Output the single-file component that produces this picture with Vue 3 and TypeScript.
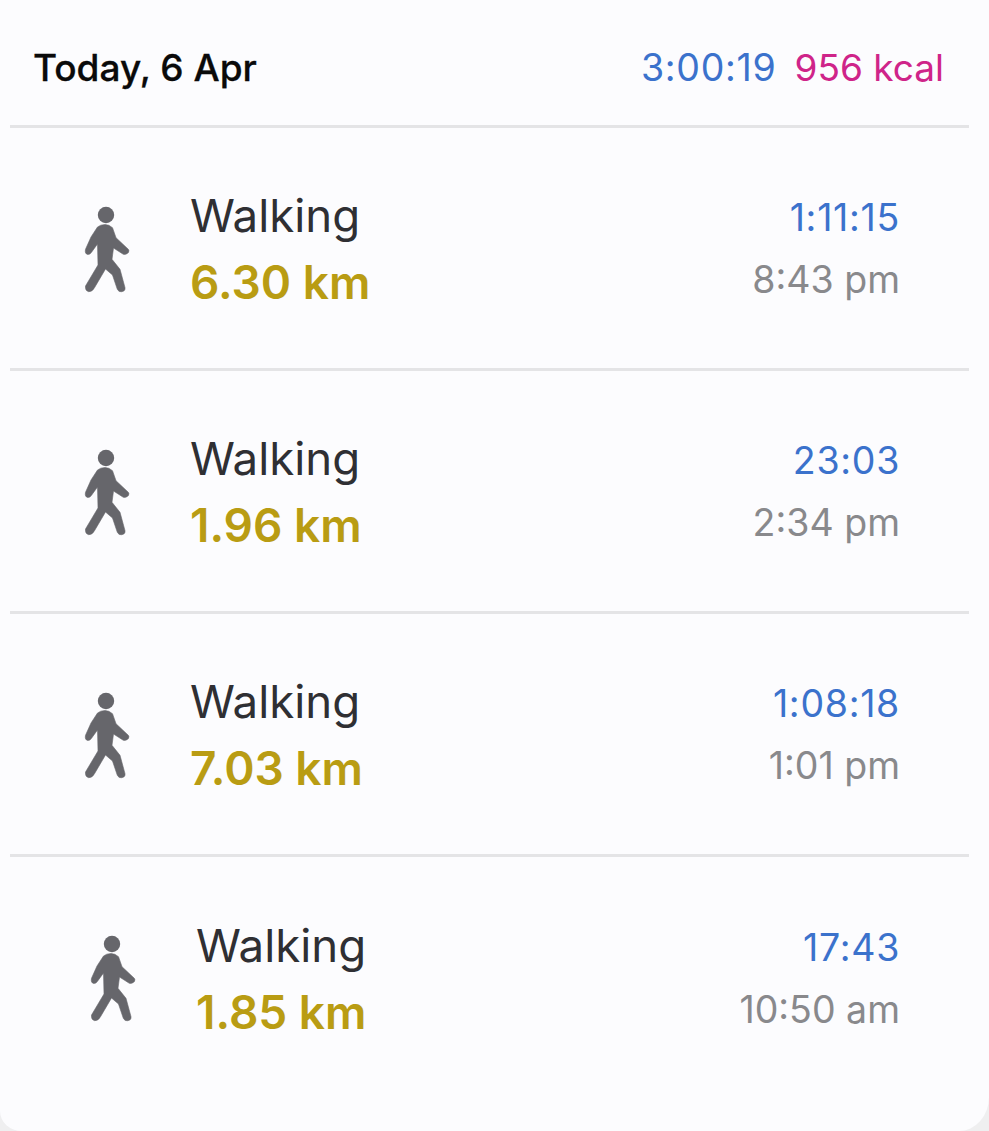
<script setup lang="ts">
interface Activity {
  name: string
  distance: string
  duration: string
  time: string
  shifted?: boolean
}

const activities: Activity[] = [
  { name: 'Walking', distance: '6.30 km', duration: '1:11:15', time: '8:43 pm' },
  { name: 'Walking', distance: '1.96 km', duration: '23:03', time: '2:34 pm' },
  { name: 'Walking', distance: '7.03 km', duration: '1:08:18', time: '1:01 pm' },
  { name: 'Walking', distance: '1.85 km', duration: '17:43', time: '10:50 am', shifted: true },
]
</script>

<template>
  <div class="page">
    <div class="sheet">
      <header class="summary">
        <span class="day">Today, 6 Apr</span>
        <span class="totals">
          <span class="total-time">3:00:19</span>
          <span class="total-kcal">956 kcal</span>
        </span>
      </header>
      <ul class="list">
        <li
          v-for="item in activities"
          :key="item.time"
          :class="['row', { shifted: item.shifted }]"
        >
          <svg class="walker" viewBox="0 0 60 100" aria-hidden="true">
            <circle cx="26" cy="14" r="8.2" fill="#66666b" />
            <path
              d="M17.5 26 L11 36 L5.5 48.3 Q4.5 53 8 53.5 Q10 53.5 11.2 51.7 L17.5 43 L18 64 L5.5 85 Q5 90 8.8 90.7 Q12.5 90.7 14.5 86.7 L25.5 68 L32.5 74 L37.3 88.3 Q39 91.5 41.7 90.7 Q45.5 90 45 86.7 L40 68.3 L32 58.3 L33.5 47 L43.3 53.3 Q46 54 48.3 51.7 Q49.5 49.5 48.3 48.3 L36 36.7 L32.5 26.7 Q29 23.5 25 23.5 Q20.5 23.5 17.5 26 Z"
              fill="#66666b"
              stroke="#66666b"
              stroke-width="0.6"
              stroke-linejoin="round"
            />
          </svg>
          <div class="main">
            <span class="name">{{ item.name }}</span>
            <span class="distance">{{ item.distance }}</span>
          </div>
          <div class="side">
            <span class="duration">{{ item.duration }}</span>
            <span class="time">{{ item.time }}</span>
          </div>
        </li>
      </ul>
    </div>
  </div>
</template>

<style>
html,
body {
  margin: 0;
  background: #efeff0;
}
</style>

<style scoped>
.page {
  width: 989px;
  height: 1131px;
  overflow: hidden;
  font-family: Inter, 'Noto Sans', sans-serif;
}

.sheet {
  box-sizing: border-box;
  height: 1131px;
  padding: 0 20px 0 10px;
  background: #fcfcfe;
  border-radius: 0 0 30px 22px / 0 0 34px 20px;
}

.summary {
  box-sizing: border-box;
  height: 128px;
  display: flex;
  align-items: center;
  justify-content: space-between;
  padding: 10px 25px 0 23px;
  border-bottom: 3px solid #e4e4e6;
}

.day {
  font-size: 37px;
  font-weight: 500;
  color: #0a0a0a;
  -webkit-text-stroke: 0.3px #0a0a0a;
}

.totals {
  display: flex;
  gap: 18px;
  font-size: 37px;
}

.total-time {
  color: #3b72cc;
  font-size: 37.5px;
  letter-spacing: 0.7px;
}

.total-kcal {
  color: #cf2489;
}

.list {
  margin: 0;
  padding: 0;
  list-style: none;
}

.row {
  box-sizing: border-box;
  height: 243px;
  display: flex;
  align-items: center;
  padding: 0 69px 0 70px;
  border-bottom: 3px solid #e4e4e6;
}

.row:last-child {
  border-bottom: 0;
}

.walker {
  width: 60px;
  height: 100px;
  flex: none;
  margin-top: 6px;
  filter: blur(0.5px);
}

.main {
  display: flex;
  flex-direction: column;
  gap: 14px;
  margin-left: 50px;
  margin-top: 2px;
}

.shifted .walker {
  margin-left: 6px;
  margin-top: 2px;
}

.shifted .main,
.shifted .side {
  margin-top: 0;
}

.name {
  font-size: 45.6px;
  line-height: 52px;
  color: #2f2f33;
}

.distance {
  font-size: 46px;
  line-height: 52px;
  font-weight: 600;
  color: #b99c13;
}

.side {
  margin-left: auto;
  display: flex;
  flex-direction: column;
  align-items: flex-end;
  gap: 20px;
  margin-top: 2px;
}

.duration {
  font-size: 37.5px;
  line-height: 42px;
  color: #3b72cc;
  letter-spacing: 0.7px;
}

.time {
  font-size: 37.5px;
  line-height: 42px;
  color: #89898c;
}
</style>
